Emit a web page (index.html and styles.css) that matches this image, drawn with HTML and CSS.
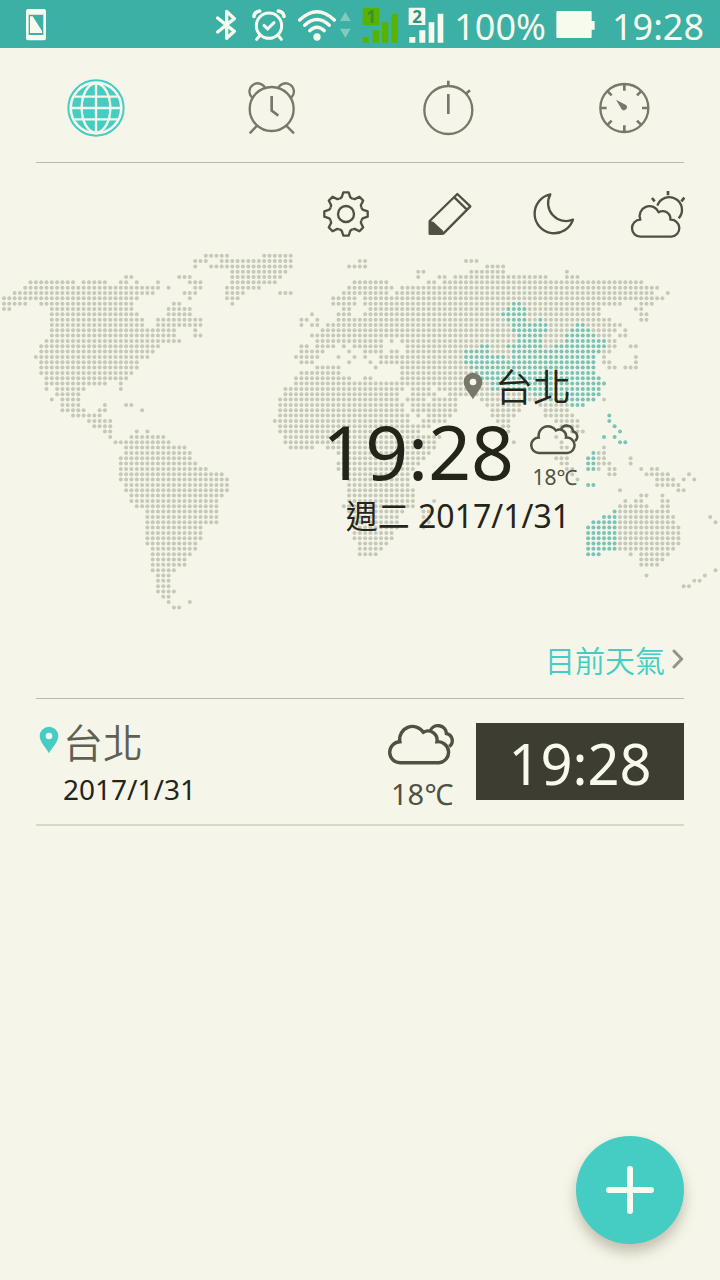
FILE: index.html
```html
<!DOCTYPE html>
<html lang="zh-Hant">
<head>
  <meta charset="UTF-8">
  <title>時鐘</title>
  <meta name="viewport" content="width=device-width, initial-scale=1">
  <link rel="stylesheet" href="styles.css">
</head>
<body>

<div class="status-bar">
  <svg class="status-phone" width="20" height="32" viewBox="0 0 60 96">
    <path fill="currentColor" fill-rule="evenodd" d="M6 0H54Q60 0 60 6V88Q60 94 54 94H6Q0 94 0 88V6Q0 0 6 0ZM8 17V78H52V17Z"/>
    <path fill="currentColor" d="M12 22H20L48 66V72H12Z"/>
  </svg>
  <svg width="26" height="32" viewBox="0 0 78 96">
    <path d="M2 27L52 67L29 88V7L52 29L2 69" fill="none" stroke="currentColor" stroke-width="10" stroke-linecap="round" stroke-linejoin="round" transform="translate(3 0)"/>
  </svg>
  <svg width="36" height="32" viewBox="0 0 108 96" fill="none" stroke="currentColor" stroke-linecap="round">
    <circle cx="51" cy="50" r="38" stroke-width="9"/>
    <path d="M36 49L47 60L66 41" stroke-width="9"/>
    <path d="M22 81L14 91M80 81L88 91" stroke-width="9"/>
    <path d="M6 22Q8 8 23 6M96 22Q94 8 79 6" stroke-width="11"/>
  </svg>
  <svg width="54" height="32" viewBox="0 0 162 96">
    <g fill="none" stroke="currentColor" stroke-width="10" stroke-linecap="round">
      <path d="M5 33Q57 -17 109 33"/>
      <path d="M20 49Q57 14 94 49"/>
      <path d="M35 65Q57 45 79 65"/>
    </g>
    <circle cx="57" cy="84" r="11" fill="currentColor"/>
    <path class="traffic" d="M126 36L142 9L158 36ZM126 59H158L142 86Z"/>
  </svg>
  <svg class="sim sim-one" width="36" height="36" viewBox="0 0 108 108">
    <path fill="currentColor" d="M4 2H48Q52 2 52 6V54H2V6Q2 2 4 2ZM2 90H20V107H2ZM32 70H51V107H32ZM60 46H79V107H60ZM89 20H107V107H89Z"/>
    <text class="sim-label" x="27" y="47" text-anchor="middle">1</text>
  </svg>
  <svg class="sim" width="36" height="36" viewBox="0 0 108 108">
    <path fill="currentColor" d="M4 2H48Q52 2 52 6V54H2V6Q2 2 4 2ZM4 90H22V107H4ZM34 70H52V107H34ZM62 46H79V107H62ZM89 20H106V107H89Z"/>
    <text class="sim-label" x="27" y="47" text-anchor="middle">2</text>
  </svg>
  <span>100%</span>
  <svg width="46" height="32" viewBox="0 0 138 96">
    <path fill="currentColor" d="M4 6H104Q107 6 107 9V36H116V62H107V84Q107 87 104 87H4Q1 87 1 84V9Q1 6 4 6Z"/>
  </svg>
  <span>19:28</span>
</div>

<nav class="tabs">
  <button class="tab active" aria-label="世界時鐘">
    <svg width="60" height="60" viewBox="0 0 180 180">
      <circle cx="90" cy="90" r="83" fill="none" stroke="currentColor" stroke-width="6"/>
      <circle cx="90" cy="90" r="72" fill="currentColor"/>
      <g class="globe-lines">
        <path d="M90 16V164M16 90H164M26 56H154M26 124H154"/>
        <ellipse cx="90" cy="90" rx="43" ry="74"/>
      </g>
    </svg>
  </button>
  <button class="tab" aria-label="鬧鐘">
    <svg class="line-icon" width="60" height="60" viewBox="0 0 180 180">
      <circle cx="89" cy="93" r="66"/>
      <path d="M30 59A25 25 0 1 1 71 33M148 59A25 25 0 1 0 107 33M46 142L23 166M132 142L156 166"/>
      <path class="thick" d="M89 54V98L109 113"/>
    </svg>
  </button>
  <button class="tab" aria-label="碼錶">
    <svg class="line-icon" width="60" height="60" viewBox="0 0 180 180">
      <circle cx="91" cy="96" r="72"/>
      <path class="thick" d="M91 8V26M91 48V108M143 48L156 37"/>
    </svg>
  </button>
  <button class="tab" aria-label="計時器">
    <svg class="line-icon" width="60" height="60" viewBox="0 0 180 180">
      <circle cx="91" cy="90" r="72"/>
      <path class="thick" d="M91 19V38M91 142V161M20 90H38M144 90H162M41 40L53 52M129 128L141 140M141 40L129 52M53 128L41 140"/>
      <path class="solid" d="M66 65L96 81A9 9 0 1 1 83 94Z"/>
    </svg>
  </button>
</nav>

<div class="tools">
  <button class="tool" aria-label="設定">
    <svg class="line-icon" width="56" height="56" viewBox="0 0 168 168">
      <circle cx="84" cy="84" r="24"/>
      <g transform="translate(84 84)">
        <path id="tooth" d="M-19 -46L-13 -50L-8 -65H8L13 -50L19 -46"/>
        <use href="#tooth" transform="rotate(45)"/>
        <use href="#tooth" transform="rotate(90)"/>
        <use href="#tooth" transform="rotate(135)"/>
        <use href="#tooth" transform="rotate(180)"/>
        <use href="#tooth" transform="rotate(225)"/>
        <use href="#tooth" transform="rotate(270)"/>
        <use href="#tooth" transform="rotate(315)"/>
      </g>
    </svg>
  </button>
  <button class="tool" aria-label="編輯">
    <svg class="line-icon" width="56" height="56" viewBox="0 0 168 168">
      <path d="M23 105L106 24L145 61L64 143H23ZM97 34L134 70"/>
      <path class="solid" d="M21 104L34 107L64 135V143L60 147H26Q21 147 21 142Z"/>
    </svg>
  </button>
  <button class="tool" aria-label="夜間">
    <svg class="line-icon" width="56" height="56" viewBox="0 0 168 168">
      <path d="M73 25A59 59 0 1 0 141 101A54 54 0 0 1 73 25Z"/>
    </svg>
  </button>
  <button class="tool" aria-label="天氣">
    <svg class="line-icon" width="56" height="56" viewBox="0 0 168 168">
      <path d="M32 152A25 25 0 0 1 31 101A29 29 0 0 1 86 79A23 23 0 0 1 121 101A25 25 0 0 1 124 152Z"/>
      <path d="M82 59A38 38 0 1 1 146 97"/>
      <path class="thick" d="M114 15V28M66 36L74 46M163 35L154 46"/>
    </svg>
  </button>
</div>

<main>
  <section class="world">
    <svg class="map" viewBox="0 250 720 370" aria-hidden="true">
      <g id="land"></g>
      <g id="zone"></g>
    </svg>
    <div class="readout">
      <div class="place">
        <svg width="20" height="28" viewBox="0 0 60 84">
          <path fill="currentColor" d="M30 2A28 28 0 0 1 58 30C58 48 38 66 30 82C22 66 2 48 2 30A28 28 0 0 1 30 2Z"/>
          <circle class="pin-hole" cx="30" cy="30" r="10"/>
        </svg>
        <span>台北</span>
      </div>
      <div class="now">
        <span class="now-time">19:28</span>
        <div class="weather small">
          <svg class="cloud" viewBox="0 0 200 130">
            <path d="M37 120A30 30 0 0 1 35 58A38 38 0 0 1 104 30A27 27 0 0 1 144 58A31 31 0 0 1 150 120Z"/>
            <path d="M124 26A25 25 0 0 1 172 34A21 21 0 0 1 180 72"/>
          </svg>
          <span>18℃</span>
        </div>
      </div>
      <div class="date">週二 2017/1/31</div>
    </div>
  </section>

  <div class="forecast">
    <a href="#weather">目前天氣
      <svg width="12" height="20" viewBox="0 0 36 60">
        <path d="M6 6L29 30L6 54" fill="none" stroke="currentColor" stroke-width="9" stroke-linecap="round" stroke-linejoin="round"/>
      </svg>
    </a>
  </div>

  <ul class="cities">
    <li class="city">
      <svg class="city-pin" width="20" height="28" viewBox="0 0 60 84">
        <path fill="currentColor" d="M30 2A28 28 0 0 1 58 30C58 48 38 66 30 82C22 66 2 48 2 30A28 28 0 0 1 30 2Z"/>
        <circle class="pin-hole" cx="30" cy="30" r="10"/>
      </svg>
      <div class="city-info">
        <div class="city-name">台北</div>
        <div class="city-date">2017/1/31</div>
      </div>
      <div class="weather">
        <svg class="cloud" viewBox="0 0 200 130">
          <path d="M37 120A30 30 0 0 1 35 58A38 38 0 0 1 104 30A27 27 0 0 1 144 58A31 31 0 0 1 150 120Z"/>
          <path d="M124 26A25 25 0 0 1 172 34A21 21 0 0 1 180 72"/>
        </svg>
        <span>18℃</span>
      </div>
      <div class="city-time">19:28</div>
    </li>
  </ul>
</main>

<button class="add-btn" aria-label="新增城市">
  <svg width="48" height="48" viewBox="0 0 48 48">
    <path d="M24 3V45M3 24H45" stroke="currentColor" stroke-width="6" stroke-linecap="round"/>
  </svg>
</button>

<script src="map.js"></script>
</body>
</html>
```

FILE: styles.css
```css
:root {
  --bg: #f5f6e9;
  --bar: #3cb0a5;
  --accent: #45cdc3;
  --dark: #24251a;
  --icon: #77786a;
  --tool: #505143;
  --line: #b9bbae;
  --dot: #c6c8ba;
  --dot-zone: #78c4b8;
}

* {
  box-sizing: border-box;
}

body {
  margin: 0;
  min-height: 100vh;
  background: var(--bg);
  color: var(--dark);
  font-family: "Noto Sans", "Noto Sans CJK TC", sans-serif;
}

svg {
  display: block;
  flex-shrink: 0;
}

button {
  padding: 0;
  border: none;
  background: none;
  color: inherit;
  cursor: pointer;
}

/* status bar */
.status-bar {
  display: flex;
  align-items: center;
  gap: 10px;
  height: 48px;
  padding: 2px 16px 0 26px;
  background: var(--bar);
  color: #f7fbee;
  font-size: 36px;
  line-height: 46px;
}

.status-bar span {
  padding-top: 3px;
}

.status-phone {
  margin-right: auto;
}

.traffic {
  fill: #80cbbd;
}

.sim {
  overflow: visible;
}

.sim-one {
  color: #58b300;
}

.sim-label {
  font-size: 51px;
  font-weight: 700;
  fill: #329486;
}

.sim-one .sim-label {
  fill: #3a8f2c;
}

/* tabs */
.tabs {
  display: grid;
  grid-template-columns: repeat(4, 1fr);
  padding: 0 8px;
  height: 114px;
}

.tab {
  display: flex;
  align-items: center;
  justify-content: center;
  height: 120px;
  color: var(--icon);
}

.tab.active {
  color: var(--accent);
}

.globe-lines {
  fill: none;
  stroke: var(--bg);
  stroke-width: 7;
}

.line-icon {
  fill: none;
  stroke: currentColor;
  stroke-width: 7;
  stroke-linejoin: round;
}

.line-icon .thick {
  stroke-width: 8;
  stroke-linejoin: miter;
}

.line-icon .solid {
  fill: currentColor;
  stroke: none;
}

/* toolbar */
.tools {
  display: flex;
  justify-content: flex-end;
  padding: 23px 10px 8px;
  position: relative;
}

.tools::before {
  content: "";
  position: absolute;
  top: 0;
  left: 36px;
  right: 36px;
  border-top: 1px solid var(--line);
}

.tool {
  display: flex;
  justify-content: center;
  width: 104px;
  padding-top: 1px;
  color: var(--tool);
}

/* map and main clock share one grid cell */
.world {
  display: grid;
}

.world > * {
  grid-area: 1 / 1;
}

.map {
  width: 100%;
}

#land {
  fill: var(--dot);
}

#zone {
  fill: var(--dot-zone);
}

.readout {
  justify-self: end;
  align-self: start;
  margin-right: 140px;
  padding-top: 113px;
}

.place {
  display: flex;
  align-items: center;
  justify-content: flex-end;
  gap: 12px;
  padding-right: 9px;
  font-size: 38px;
  line-height: 46px;
  font-weight: 350;
}

.place svg {
  color: var(--icon);
}

.pin-hole {
  fill: var(--bg);
}

.now {
  display: flex;
  align-items: center;
  justify-content: flex-end;
  gap: 16px;
}

.now-time {
  font-size: 75px;
  line-height: 84px;
}

.date {
  padding-right: 10px;
  font-size: 32px;
  line-height: 46px;
  text-align: right;
}

.weather {
  display: flex;
  flex-direction: column;
  align-items: center;
  gap: 10px;
  width: 68px;
  color: var(--tool);
  font-size: 29px;
  line-height: 36px;
}

.weather.small {
  gap: 8px;
  width: 50px;
  padding-top: 12px;
  font-size: 21px;
  line-height: 28px;
}

.weather span {
  white-space: nowrap;
}

.cloud {
  width: 100%;
  fill: none;
  stroke: currentColor;
  stroke-width: 10;
}

/* link to forecast */
.forecast {
  display: flex;
  justify-content: flex-end;
  align-items: center;
  height: 78px;
  margin: 0 36px;
}

.forecast a {
  display: flex;
  align-items: center;
  gap: 7px;
  color: var(--accent);
  font-size: 30px;
  font-weight: 350;
  text-decoration: none;
}

.forecast svg {
  color: #94958a;
}

/* city list */
.cities {
  list-style: none;
  margin: 0 36px;
  padding: 0;
  border-top: 1px solid var(--line);
}

.city {
  display: flex;
  align-items: flex-start;
  padding: 20px 0 12px;
  border-bottom: 2px solid #d6d8ca;
}

.city-pin {
  margin: 7px 4px 0 3px;
  color: var(--accent);
}

.city-info {
  margin-right: auto;
}

.city-name {
  color: #5f6052;
  font-size: 40px;
  font-weight: 350;
  line-height: 48px;
}

.city-date {
  font-size: 28px;
  line-height: 44px;
}

.city .weather {
  margin: 3px 20px 0 0;
}

.city-time {
  width: 208px;
  margin-top: 4px;
  padding-top: 3px;
  background: #3d3e31;
  color: #f9faee;
  font-size: 56px;
  line-height: 74px;
  text-align: center;
}

/* floating button */
.add-btn {
  position: fixed;
  right: 36px;
  bottom: 36px;
  display: flex;
  align-items: center;
  justify-content: center;
  width: 108px;
  height: 108px;
  border-radius: 50%;
  background: var(--accent);
  color: #fafbee;
  box-shadow: 0 8px 14px rgba(80, 60, 40, 0.3);
}
```

FILE: map.js
```javascript
// Dotted world map. One string per row, runs of columns "from-to";
// a leading * marks dots in the current time zone.
const rows = [
  "38-42 49-54",
  "36-38 41-54 67-68 87-89",
  "36 39-54 65-68 91-94",
  "43-53 78-79 88-94 106",
  "23-24 33-35 43-52 78 82-83 85-102 106-108",
  "5-13 15-19 22-23 25 29 35-37 43-51 66-72 80-81 83-120",
  "4-29 31 36-37 42-48 65-73 75-123",
  "2-28 34-36 42-45 52-54 64-72 74-122 125",
  "0-25 35 42-44 62-66 68-124",
  "0-4 7-24 32-33 43 62-66 68-95 *96-97 98-116 120-122",
  "0-1 9-24 31-35 64-65 69-94 *95-98 99-112 119-120",
  "9-25 31-35 58 63-65 68-93 *94-98 99-112 120-121",
  "9-26 29-37 56-57 59 63-94 *95-98 99-100 *101 102-114 120-121",
  "9-26 29-37 56 58-59 61-95 *96-102 103-107 *108-109 110-116",
  "9-32 36 60-95 *96-102 103-106 *107-110 111-115 117",
  "9-32 36-37 58-96 *97-101 102-105 *106-111 112-114 116-117",
  "8-33 59-71 73 75-96 *97-101 102-105 *106-113 114-115",
  "7-29 56-57 59-62 64 66-71 76-89 *90-91 92-94 *95-101 102-103 *104-113 114-115 118-119",
  "7-28 56-60 65 68-71 73-74 76-86 *87-91 92-95 *96-112 113-114",
  "6-27 55-59 63 66 68 71-86 *87-94 95 *96-111 113 119",
  "7-25 56-58 65 69 71-86 *87-111 113-114 119",
  "7-25 59-63 70 75-87 *88-111 114-115 117-119",
  "7-24 56-63 75-88 *89-111",
  "8-23 55-65 68-69 75-88 *90-112",
  "8-19 22 55-91 *92-113",
  "8 10-15 22 53-75 77-80 82-91 *92-112",
  "10-14 53-74 77-81 84-99 *100-112",
  "9 11-14 52-74 76-79 81-85 90-102 *103-111 113",
  "11-14 19 23-24 52-75 77-85 91-97 101-106 *107-109",
  "11-15 18-19 26 52-75 77-85 92-97 102-106",
  "13-18 52-76 78 80-84 92-96 102-107 *114",
  "16-20 51-76 79-83 93-95 104-108 *114",
  "17-20 52-80 94-95 105-108 *115",
  "19-20 25 27 52-78 95 107-109 *116",
  "20 24-30 53-82 104 *113 *115",
  "21-31 53-81 96 105 *116-117",
  "23-34 54-58 61-81 105-106 113",
  "23-35 63-80 *111 112-113",
  "22-35 64-79 104-106 *110-111 112-113 118",
  "22-36 63-78 105-106 *110-111 112-114 118",
  "22-38 63-77 106-107 *110-111 112 114-115 120 122-123",
  "22-41 64-76 107 114-115 121-125 129",
  "22-42 65-76 108 123-126 128 130",
  "23-42 65-76 *110-111 123-127",
  "23-42 65-77 116 127-128",
  "24-41 65-77 120-121 124",
  "24-40 65-77 81 117 119-120 124-125",
  "25-40 64-77 116-121 124-125",
  "27-40 65-75 79-80 *115 116-125",
  "27-40 66-74 79-80 *113-115 116-126 133",
  "27-40 66-74 79-80 *111-115 116-126 134",
  "27-37 66-74 79 *110-115 116-127",
  "27-37 66-73 *110-115 116-127",
  "27-37 66-73 *110-115 116-127",
  "27-36 67-72 *110-115 116-127",
  "28-36 67-71 *110-115 116-126",
  "28-35 67-70 *110-112 118 120-125",
  "28-34 120-124",
  "28-34 120-123",
  "28-32 134",
  "29-31 121 132",
  "29-31 130-131",
  "29-31 128-129",
  "29-32",
  "30-31",
  "31 35",
  "32-33"
];

const STEP_X = 5.31;
const STEP_Y = 5.33;
const dots = { land: "", zone: "" };

rows.forEach((row, r) => {
  row.split(" ").forEach(run => {
    const layer = run[0] === "*" ? "zone" : "land";
    const [from, to = from] = run.replace("*", "").split("-").map(Number);
    for (let c = from; c <= to; c++) {
      const x = (4 + c * STEP_X).toFixed(1);
      const y = (255.7 + r * STEP_Y).toFixed(1);
      dots[layer] += `<circle cx="${x}" cy="${y}" r="2"/>`;
    }
  });
});

document.getElementById("land").innerHTML = dots.land;
document.getElementById("zone").innerHTML = dots.zone;
```
